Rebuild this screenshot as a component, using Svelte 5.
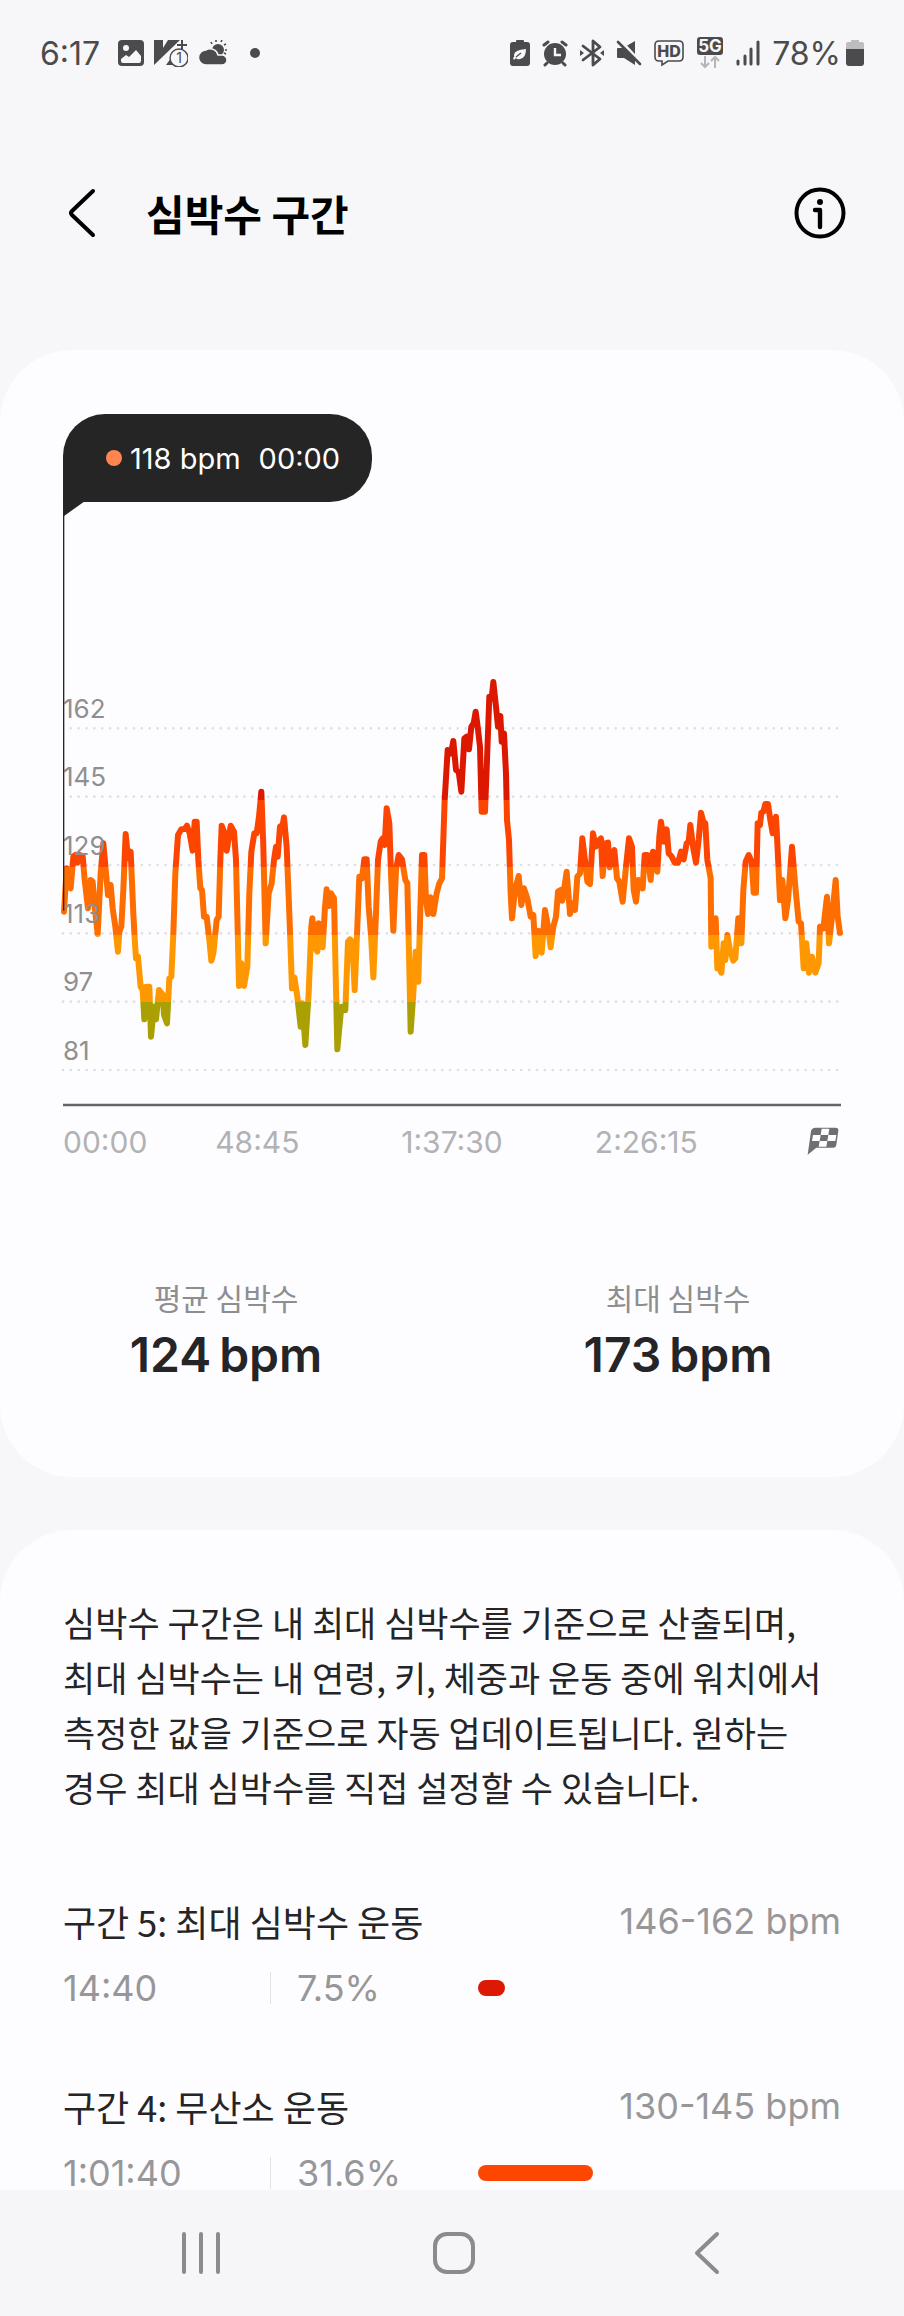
<script lang="ts">
  type Zone = { name: string; range: string; time: string; percent: number; color: string };

  const zones: Zone[] = [
    { name: '구간 5: 최대 심박수 운동', range: '146-162 bpm', time: '14:40', percent: 7.5, color: '#dc1a04' },
    { name: '구간 4: 무산소 운동', range: '130-145 bpm', time: '1:01:40', percent: 31.6, color: '#fd4602' },
  ];

  const stats = [
    { label: '평균 심박수', value: 124 },
    { label: '최대 심박수', value: 173 },
  ];

  const gridLines = [
    { bpm: 162, y: 205, start: 23 },
    { bpm: 145, y: 410, start: 23 },
    { bpm: 129, y: 615, start: 23 },
    { bpm: 113, y: 820, start: 0 },
    { bpm: 97, y: 1025, start: 0 },
    { bpm: 81, y: 1230, start: 0 },
  ];

  const ticks = [
    { label: '00:00', x: 0, anchor: 'start' },
    { label: '48:45', x: 583, anchor: 'middle' },
    { label: '1:37:30', x: 1167, anchor: 'middle' },
    { label: '2:26:15', x: 1750, anchor: 'middle' },
  ] as const;

  // samples are stored in three blocks, each with its own x offset
  const samples: [number, string][] = [
    [-69, '72,755 80,625 84,660 92,685 100,590 106,585 112,608 120,585 128,588 134,660 144,745 152,660 158,665 164,740 173,822 182,640 190,550 198,640 204,705 212,675 218,745 226,800 234,875 238,815 244,800 250,690 257,522 264,595 272,575 280,760 284,835 288,895 294,890 302,980 308,990 313,1078 318,980 328,980 333,1130 342,1040 348,1078 357,990 368,1003 372,1065 381,1090 388,955 394,950 400,820 406,640 414,525 424,508 434,507 441,497 449,520 458,572 464,485 470,485 475,600 481,685 486,690 492,770 500,770 508,840 514,902 520,880 530,780 536,770 541,600 545,497 552,515 560,572 572,497 582,515 588,600 597,978 604,910 612,978 622,920 628,700 634,575 643,520 650,520 657,470 664,395 670,560 677,850 686,700 695,670 702,600 708,560 713,590 720,500 728,495 732,472 740,560 748,760 756,985 763,952 772,1010 782,1100 787,1030 796,1155 806,1000 814,800 817,775 824,860 832,875 836,790 842,830'],
    [771, '8,862 15,740 20,688 27,738 33,700 42,715 52,1168 64,1040 76,1050 84,845 90,838 97,845 104,990 112,800 118,650 126,655 133,598 140,598 146,740 153,825 160,952 168,760 174,600 182,545 188,535 194,555 200,445 208,490 213,640 220,812 228,630 236,585 246,598 256,660 262,670 267,880 272,1115 280,1000 287,875 295,965 301,750 306,585 313,585 318,720 324,762 331,712 340,762 350,700 358,670 366,655 374,420 383,270 393,280 400,243 408,330 416,335 424,395 433,235 440,230 447,268 454,200 461,190 467,155 473,200 480,260 485,455 495,455 501,300 508,110 515,115 520,66 528,140 534,200 541,168 545,245 552,220 558,340 561,480 567,540 572,700 576,775 585,690 596,648 604,735 612,685 622,715 632,770 640,765 647,888 655,812 665,878 675,750 684,800 692,862 700,800 708,770 714,695 722,690 727,722 740,635 750,762 758,730 765,750 772,650 780,640 787,535 796,610 802,665 810,672 819,520 827,560 833,545 843,535'],
    [1611, '8,648 16,550 24,548 29,622 36,590 43,570 51,655 58,665 68,725 78,620 87,535 96,560 101,690 108,725 115,660 122,665 128,685 134,585 143,585 152,660 159,575 166,595 172,635 178,530 183,485 192,545 200,508 206,580 214,588 224,608 234,608 243,575 251,598 260,550 266,545 271,495 279,560 288,608 296,540 303,458 310,485 316,490 322,600 332,655 334,860 347,775 352,925 358,925 364,938 371,850 376,900 382,825 390,870 400,902 406,895 415,775 424,850 430,690 437,605 446,585 455,605 461,698 468,698 473,490 480,495 484,458 490,455 496,432 504,432 511,480 518,520 528,470 533,570 540,720 547,660 556,775 564,720 576,560 586,680 596,785 603,790 611,925 619,850 627,938 636,890 646,938 656,910 660,800 670,805 681,710 687,850 695,780 707,660 713,770 720,820'],
  ];

  const linePoints = samples
    .flatMap(([offset, block]) =>
      block.split(' ').map((pair) => {
        const [x, y] = pair.split(',').map(Number);
        return `${x + offset},${y}`;
      })
    )
    .join(' ');

  // heart rate zone bands, top to bottom
  const bands = [
    { from: 0, to: 420, color: '#dc1800' },
    { from: 420, to: 621, color: '#fc4500' },
    { from: 621, to: 825, color: '#fe6d00' },
    { from: 825, to: 1026, color: '#ff9800' },
    { from: 1026, to: 1300, color: '#aba003' },
  ];
</script>

<div class="screen">
  <div class="status-bar">
    <div class="status-left">
      <span class="clock">6:17</span>
      <svg width="26" height="28" viewBox="0 0 26 28">
        <rect x="0" y="1" width="26" height="26" rx="4" fill="#4b4b4d" />
        <circle cx="8" cy="9" r="3" fill="#f7f7f9" />
        <path d="M3 20l5-4 3 2 7-7 5 6v5q0 2-2 2H5q-2 0-2-2z" fill="#f7f7f9" />
      </svg>
      <svg width="34" height="28" viewBox="0 0 34 28">
        <path d="M0 1h9v8l5-8h12L0 26z" fill="#4b4b4d" />
        <path d="M12 26l8-11v11z" fill="#4b4b4d" />
        <path d="M28 1v9M23 6h10" stroke="#4b4b4d" stroke-width="2" />
        <circle cx="25" cy="19" r="9" fill="#f7f7f9" stroke="#4b4b4d" stroke-width="1.4" />
        <text x="25" y="24" text-anchor="middle" font-size="14" fill="#4b4b4d">1</text>
      </svg>
      <svg width="30" height="26" viewBox="0 0 30 26">
        <circle cx="20" cy="10" r="6" fill="#4b4b4d" />
        <path d="M14 4l-1-2M18 2V0M23 2l1-2M26 5l2-1M27 10h2M26 13l2 1" stroke="#4b4b4d" stroke-width="1.6" />
        <path d="M8 25a7.500 7.500 0 0 1 0-15 8 8 0 0 1 12 5h4a5 5 0 0 1 0 10z" fill="#4b4b4d" stroke="#f7f7f9" stroke-width="1.400" />
      </svg>
      <span class="more-dot"></span>
    </div>
    <div class="status-right">
      <svg width="20" height="28" viewBox="0 0 20 28">
        <path d="M6 3V2q0-1 1-1h6q1 0 1 1v1h3q3 0 3 3v18q0 3-3 3H3q-3 0-3-3V6q0-3 3-3z" fill="#4b4b4d" />
        <path d="M3 19q2-1 1-3 0-5 12-6 0 9-6 10-3 1-4-1l-2 2z" fill="#f7f7f9" />
        <path d="M6 18l5-4" stroke="#4b4b4d" stroke-width="1.200" />
      </svg>
      <svg width="26" height="28" viewBox="0 0 26 28">
        <circle cx="13" cy="15" r="11" fill="#4b4b4d" />
        <path d="M2 6l4-3M24 6l-4-3M5 24l-2 2M21 24l2 2" stroke="#4b4b4d" stroke-width="3" stroke-linecap="round" />
        <path d="M13 9v7h6" fill="none" stroke="#f7f7f9" stroke-width="2.400" />
      </svg>
      <svg width="24" height="28" viewBox="0 0 24 28">
        <path d="M3 7l17 13-7 6V2l7 6L3 21" fill="none" stroke="#4b4b4d" stroke-width="2.800" stroke-linecap="round" stroke-linejoin="round" />
        <path d="M0 11l4 3-4 3zM24 11l-4 3 4 3z" fill="#4b4b4d" />
      </svg>
      <svg width="26" height="28" viewBox="0 0 26 28">
        <path d="M1 10q0-1 1-1h5L19 2v24L8 19H2q-1 0-1-1z" fill="#4b4b4d" />
        <path d="M4 1l22 24" stroke="#f7f7f9" stroke-width="3" />
        <path d="M2 3l22 22" stroke="#4b4b4d" stroke-width="2.600" stroke-linecap="round" />
      </svg>
      <svg width="30" height="28" viewBox="0 0 30 28">
        <path d="M5 2h20q4 0 4 4v12q0 4-4 4H14l-6 4v-4H5q-4 0-4-4V6q0-4 4-4z" fill="none" stroke="#4b4b4d" stroke-width="1.600" />
        <text x="15" y="18" text-anchor="middle" font-size="16" font-weight="800" fill="#4b4b4d">HD</text>
      </svg>
      <svg width="28" height="34" viewBox="0 0 28 34">
        <rect x="1" y="1" width="26" height="18" rx="3" fill="#4b4b4d" />
        <text x="14" y="16" text-anchor="middle" font-size="17" font-weight="700" fill="#f7f7f9">5G</text>
        <path d="M9 20v11M5 27l4 4 4-4M19 32V21M15 25l4-4 4 4" fill="none" stroke="#b5b5b7" stroke-width="2" />
      </svg>
      <svg width="24" height="28" viewBox="0 0 24 28">
        <path d="M2 22v3M9 17v8M15 10v15M22 3v22" stroke="#4b4b4d" stroke-width="3" stroke-linecap="round" />
      </svg>
      <span class="battery">
        78%
        <svg width="18" height="28" viewBox="0 0 18 28">
          <path d="M5 3V1h8v2h3q2 0 2 2v5H0V5q0-2 2-2z" fill="#bdbdbf" />
          <path d="M0 10h18v14q0 3-3 3H3q-3 0-3-3z" fill="#4b4b4d" />
        </svg>
      </span>
    </div>
  </div>

  <header class="app-bar">
    <button class="icon-button" aria-label="뒤로">
      <svg width="38" height="50" viewBox="0 0 38 50">
        <path d="M31 3L10 23q-2 2 0 4l21 20" fill="none" stroke="#000" stroke-width="4" stroke-linecap="round" />
      </svg>
    </button>
    <h1>심박수 구간</h1>
    <button class="icon-button" aria-label="정보">
      <svg width="52" height="52" viewBox="0 0 52 52">
        <circle cx="26" cy="26" r="23.500" fill="none" stroke="#000" stroke-width="4" />
        <circle cx="26" cy="15" r="3" fill="#000" />
        <path d="M21 23h5v17" fill="none" stroke="#000" stroke-width="4.400" stroke-linecap="round" stroke-linejoin="round" />
      </svg>
    </button>
  </header>

  <main>
    <section class="card chart-card">
      <div class="tooltip">
        <span class="tooltip-dot"></span>
        <span class="tooltip-value">118 bpm</span>
        <span>00:00</span>
      </div>
      <svg class="chart" viewBox="0 -474 2334 1974" role="img" aria-label="심박수 그래프">
        <defs>
          <linearGradient id="zone-bands" gradientUnits="userSpaceOnUse" x1="0" y1="0" x2="0" y2="1300">
            {#each bands as band}
              <stop offset={band.from / 1300} stop-color={band.color} />
              <stop offset={band.to / 1300} stop-color={band.color} />
            {/each}
          </linearGradient>
        </defs>
        {#each gridLines as line}
          <line class="grid" x1={line.start} x2="2326" y1={line.y} y2={line.y} />
        {/each}
        <polyline class="heart-rate" points={linePoints} />
        {#each gridLines as line}
          <text class="y-label" x="0" y={line.y - 31}>{line.bpm}</text>
        {/each}
        <path d="M0 -482H74L62 -474 0 -430z" fill="#252525" />
        <line class="cursor" x1="2" x2="2" y1="-440" y2="752" />
        <line class="axis" x1="0" x2="2334" y1="1335" y2="1335" />
        {#each ticks as tick}
          <text class="x-label" x={tick.x} y="1479" text-anchor={tick.anchor}>{tick.label}</text>
        {/each}
        <g transform="translate(2196 1365)">
          <path d="M62 38h60q9 0 8 9l-6 42q-1 9-10 9H64L38 119l10-70q2-11 14-11z" fill="#6f6f71" />
          <path d="M80 41h23l-3 19H77zM54 60h23l-3 18H51zM100 60h24l-3 18H97zM74 78h23l-3 17H71z" fill="#fdfdff" />
        </g>
      </svg>
      <div class="stats">
        {#each stats as stat}
          <div class="stat">
            <span class="stat-label">{stat.label}</span>
            <span class="stat-value"><span>{stat.value}</span><span>bpm</span></span>
          </div>
        {/each}
      </div>
    </section>

    <section class="card zones-card">
      <p>심박수 구간은 내 최대 심박수를 기준으로 산출되며, 최대 심박수는 내 연령, 키, 체중과 운동 중에 워치에서 측정한 값을 기준으로 자동 업데이트됩니다. 원하는 경우 최대 심박수를 직접 설정할 수 있습니다.</p>
      {#each zones as zone}
        <div class="zone">
          <div class="zone-head">
            <h2>{zone.name}</h2>
            <span>{zone.range}</span>
          </div>
          <div class="zone-detail">
            <span>{zone.time}</span>
            <span class="zone-percent">{zone.percent}%</span>
            <div class="track">
              <div class="bar" style="width: {zone.percent}%; background: {zone.color}"></div>
            </div>
          </div>
        </div>
      {/each}
    </section>
  </main>

  <nav>
    <button class="icon-button" aria-label="최근 앱">
      <svg width="44" height="44" viewBox="0 0 44 44">
        <path d="M5 3v38M22 3v38M39 3v38" stroke="#8b8b8d" stroke-width="4" stroke-linecap="round" />
      </svg>
    </button>
    <button class="icon-button" aria-label="홈">
      <svg width="44" height="44" viewBox="0 0 44 44">
        <rect x="3" y="3" width="38" height="38" rx="12" fill="none" stroke="#8b8b8d" stroke-width="4" />
      </svg>
    </button>
    <button class="icon-button" aria-label="이전">
      <svg width="44" height="44" viewBox="0 0 44 44">
        <path d="M32 3L12 22l20 19" fill="none" stroke="#8b8b8d" stroke-width="4" stroke-linecap="round" stroke-linejoin="round" />
      </svg>
    </button>
  </nav>
</div>

<style>
  :global(body) {
    margin: 0;
    background: #f7f7f9;
  }

  .screen {
    display: flex;
    flex-direction: column;
    height: 100vh;
    background: #f7f7f9;
    color: #252527;
    font-family: Inter, "Noto Sans CJK KR", sans-serif;
  }

  svg {
    display: block;
    flex: none;
  }

  .status-bar {
    display: flex;
    align-items: center;
    justify-content: space-between;
    height: 106px;
    padding: 0 40px;
    color: #4b4b4d;
    font-size: 32px;
    flex: none;
  }

  .status-left,
  .status-right,
  .battery {
    display: flex;
    align-items: center;
  }

  .status-left {
    gap: 10px;
  }

  .clock {
    margin-right: 8px;
  }

  .more-dot {
    width: 10px;
    height: 10px;
    margin-left: 12px;
    border-radius: 50%;
    background: #4b4b4d;
  }

  .status-right {
    gap: 12px;
  }

  .battery {
    gap: 5px;
  }

  .app-bar {
    display: flex;
    align-items: center;
    height: 214px;
    margin-bottom: 30px;
    padding: 0 58px 0 62px;
    flex: none;
  }

  .icon-button {
    padding: 0;
    border: none;
    background: none;
    cursor: pointer;
  }

  h1 {
    flex: 1;
    margin: 0 0 0 46px;
    color: #000;
    font-family: "Noto Sans CJK KR", sans-serif;
    font-size: 42px;
    font-weight: 700;
    line-height: 60px;
  }

  main {
    flex: 1;
    min-height: 0;
    overflow-y: auto;
    scrollbar-width: none;
  }

  .card {
    padding: 64px 63px;
    border-radius: 72px;
    background: #fdfdff;
  }

  .chart-card {
    padding-bottom: 92px;
  }

  .tooltip {
    display: flex;
    align-items: center;
    box-sizing: border-box;
    width: max-content;
    height: 88px;
    padding: 0 32px 0 43px;
    border-radius: 42px 42px 42px 0;
    background: #252525;
    color: #fff;
    font-size: 29px;
  }

  .tooltip-dot {
    width: 16px;
    height: 16px;
    margin-right: 8px;
    border-radius: 50%;
    background: #ff8550;
  }

  .tooltip-value {
    margin-right: 18px;
  }

  .chart {
    width: 100%;
    height: auto;
    overflow: visible;
  }

  .grid {
    stroke: #dfdfe2;
    stroke-width: 8;
    stroke-linecap: round;
    stroke-dasharray: 0 23.7;
  }

  .heart-rate {
    fill: none;
    stroke: url(#zone-bands);
    stroke-width: 18;
    stroke-linecap: round;
    stroke-linejoin: round;
  }

  .y-label {
    fill: #8f8f92;
    font-size: 78px;
  }

  .cursor {
    stroke: #252525;
    stroke-width: 4;
  }

  .axis {
    stroke: #656568;
    stroke-width: 7;
  }

  .x-label {
    fill: #b2b2b4;
    font-size: 90px;
  }

  .stats {
    display: flex;
    margin: 117px -63px 0;
  }

  .stat {
    display: flex;
    flex: 1;
    flex-direction: column;
    align-items: center;
    gap: 8px;
  }

  .stat-label {
    color: #8e8e90;
    font-family: "Noto Sans CJK KR", sans-serif;
    font-size: 30px;
    line-height: 40px;
  }

  .stat-value {
    display: flex;
    gap: 8px;
    font-size: 48px;
    font-weight: 600;
    line-height: 60px;
  }

  .zones-card {
    margin-top: 53px;
  }

  p {
    margin: 0 0 83px;
    font-family: "Noto Sans CJK KR", sans-serif;
    font-size: 35px;
    line-height: 55px;
    word-break: keep-all;
  }

  .zone {
    margin-bottom: 70px;
  }

  .zone-head {
    display: flex;
    justify-content: space-between;
    margin-bottom: 19px;
    color: #97979a;
    font-size: 36px;
    line-height: 48px;
  }

  h2 {
    margin: 0;
    color: #252527;
    font-family: "Noto Sans CJK KR", sans-serif;
    font-size: 36px;
    font-weight: 400;
  }

  .zone-detail {
    display: grid;
    grid-template-columns: 207px 208px 1fr;
    align-items: center;
    color: #97979a;
    font-size: 36px;
    line-height: 48px;
  }

  .zone-percent {
    padding-left: 26px;
    border-left: 1px solid #e2e2e5;
    line-height: 32px;
  }

  .bar {
    height: 16px;
    border-radius: 8px;
  }

  nav {
    display: flex;
    height: 126px;
    padding: 0 71px 0 75px;
    background: #f6f6f8;
    flex: none;
  }

  nav .icon-button {
    display: flex;
    flex: 1;
    align-items: center;
    justify-content: center;
  }
</style>
